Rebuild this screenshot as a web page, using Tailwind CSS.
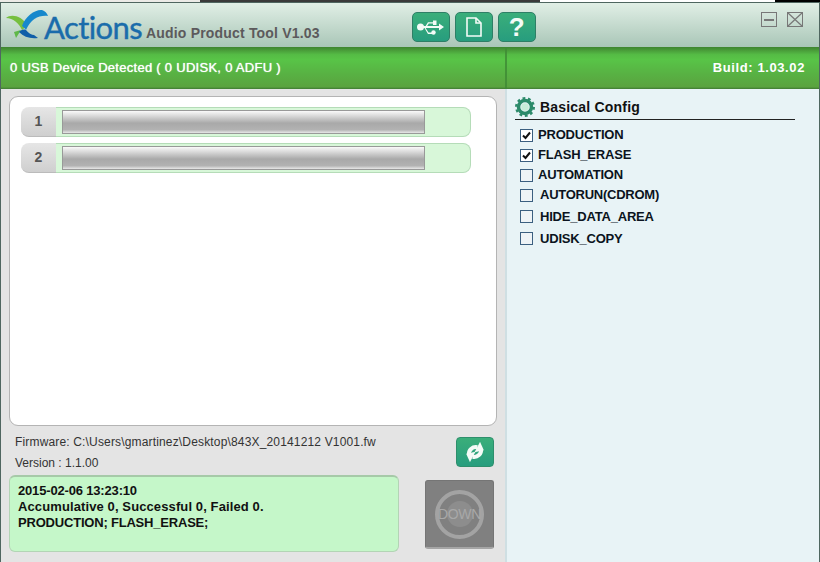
<!DOCTYPE html>
<html lang="en">
<head>
  <meta charset="UTF-8">
  <title>Actions Audio Product Tool</title>
  <script src="https://cdn.jsdelivr.net/npm/@tailwindcss/browser@4"></script>
</head>
<body class="w-[820px] h-[562px] overflow-hidden bg-white font-['Liberation_Sans',Arial,sans-serif]">
  <!-- strip of desktop above the window -->
  <div class="flex h-[2px]">
    <div class="w-[200px] bg-[#ecebe7]"></div>
    <div class="w-[340px] bg-[#3a3a3a]"></div>
    <div class="w-[235px] bg-white"></div>
    <div class="w-[45px] bg-black"></div>
  </div>

  <div class="h-[560px] flex flex-col border-t border-x border-[#4f6660]">
    <!-- title bar -->
    <div class="h-[44px] shrink-0 flex bg-gradient-to-b from-[#e1efe6] to-[#a9c6b7]">
      <svg class="ml-[4px] mt-[6px] w-[44px] h-[32px] shrink-0" viewBox="0 0 44 32">
        <path d="M1 9 C6 5 16 6 23 17 C21 18 19 19 17 21 C14 14 8 9 1 9Z" fill="#76bf3f"/>
        <path d="M9 23 L16 21 L11 29Z" fill="#5fb848"/>
        <path d="M17 17 C20 7 31 0 37 1 C40 2 42 4 43 7 C34 6 26 10 21 21 C20 19 18 18 17 17Z" fill="#1688cc"/>
        <path d="M14 23 C16 21 18 20 21 21 C23 24 27 26 29 26 L33 29 C25 30 19 28 14 23Z" fill="#0f5ea8"/>
      </svg>
      <div class="ml-[-5px] mt-[6px] text-[31px] leading-[36px] tracking-[-0.6px] text-[#1a6cab] [-webkit-text-stroke:0.4px_#1a6cab] font-['Lato',sans-serif]">Actions</div>
      <div class="ml-[4px] mt-[22px] text-[14px] leading-[16px] font-bold tracking-[0.18px] text-[#5c5a5c]">Audio Product Tool V1.03</div>

      <div class="ml-[92px] mt-[9px] flex gap-[5px]">
        <div class="w-[38px] h-[30px] rounded-[5px] border border-[#2e7f66] bg-gradient-to-b from-[#3aae7a] to-[#279d7e] flex items-center justify-center">
          <svg class="w-[27px] h-[16px]" viewBox="0 0 27 16" fill="#f4fbf7">
            <circle cx="3.500" cy="8" r="3.500"/>
            <path d="M3 7h19V4.500L27 8l-5 3.500V9H3Z"/>
            <path d="M8 8 L11 3.200H16V1.500H19.500V6H16V4.500H11.800L9.500 8Z"/>
            <path d="M8 8 L11.500 13.500H15.500V15H11L7.500 9Z"/>
            <circle cx="16.500" cy="13.500" r="2.200"/>
          </svg>
        </div>
        <div class="w-[38px] h-[30px] rounded-[5px] border border-[#2e7f66] bg-gradient-to-b from-[#3aae7a] to-[#279d7e] flex items-center justify-center">
          <svg class="w-[16px] h-[20px]" viewBox="0 0 16 20" fill="none" stroke="#f4fbf7" stroke-width="1.600">
            <path d="M1 1H10L15 6V19H1Z"/>
            <path d="M10 1V6H15"/>
          </svg>
        </div>
        <div class="w-[38px] h-[30px] rounded-[5px] border border-[#2e7f66] bg-gradient-to-b from-[#3aae7a] to-[#279d7e] flex items-center justify-center text-[26px] leading-[26px] font-bold text-[#f4fbf7]">?</div>
      </div>

      <div class="ml-[225px] mt-[9px] w-[16px] h-[15px] border border-[#777] flex items-center justify-center">
        <div class="w-[10px] h-[2px] bg-[#777]"></div>
      </div>
      <svg class="ml-[10px] mt-[9px] w-[16px] h-[15px]" viewBox="0 0 16 15" fill="none" stroke="#777">
        <rect x="0.500" y="0.500" width="15" height="14"/>
        <path d="M1 1L15 14M15 1L1 14" stroke-width="1.200"/>
      </svg>
    </div>

    <!-- status bar -->
    <div class="h-[42px] shrink-0 flex items-center bg-[linear-gradient(#3f8430_0%,#55bb45_18%,#58c447_30%,#58b143_65%,#5aa33f_95%,#3f7a33_100%)] text-white">
      <div class="w-[506px] h-full flex items-center pl-[9px] border-r-2 border-[#3f8a34]/80 text-[13px] tracking-[0.28px] [text-shadow:0_0_1px_#fff]">0 USB Device Detected ( 0 UDISK, 0 ADFU )</div>
      <div class="flex-1 text-right pr-[14px] text-[13px] font-bold tracking-[0.6px]">Build: 1.03.02</div>
    </div>

    <div class="flex-1 flex min-h-0">
      <!-- left side -->
      <div class="w-[504px] shrink-0 bg-[#e4e4e4] pl-[8px] pr-[8px] pt-[7px]">
        <div class="h-[330px] bg-white rounded-[9px] border border-[#b4b4b4] pt-[10px] pl-[11px] flex flex-col gap-[6px]">
          <div class="w-[450px] h-[30px] flex">
            <div class="w-[35px] shrink-0 rounded-l-[8px] bg-gradient-to-b from-[#e6e6e6] to-[#cfcfcf] border-b border-[#bbb] flex items-center justify-center text-[14px] font-bold text-[#555]">1</div>
            <div class="flex-1 rounded-r-[8px] bg-[#d8f7d9] border-y border-r border-[#b5dcb8] pl-[6px] pt-[2px]">
              <div class="w-[363px] h-[24px] border border-[#999] bg-[linear-gradient(#fafafa,#a9a9a9_55%,#b2b2b2_85%,#e8e8e8)]"></div>
            </div>
          </div>
          <div class="w-[450px] h-[30px] flex">
            <div class="w-[35px] shrink-0 rounded-l-[8px] bg-gradient-to-b from-[#e6e6e6] to-[#cfcfcf] border-b border-[#bbb] flex items-center justify-center text-[14px] font-bold text-[#555]">2</div>
            <div class="flex-1 rounded-r-[8px] bg-[#d8f7d9] border-y border-r border-[#b5dcb8] pl-[6px] pt-[2px]">
              <div class="w-[363px] h-[24px] border border-[#999] bg-[linear-gradient(#fafafa,#a9a9a9_55%,#b2b2b2_85%,#e8e8e8)]"></div>
            </div>
          </div>
        </div>

        <div class="flex justify-between h-[49px] pl-[6px] pr-[3px]">
          <div class="text-[12px] text-[#333] pt-[8px]">
            <div class="leading-[16px] tracking-[0.16px]">Firmware: C:\Users\gmartinez\Desktop\843X_20141212 V1001.fw</div>
            <div class="leading-[16px] mt-[5px]">Version : 1.1.00</div>
          </div>
          <div class="mt-[11px] w-[38px] h-[30px] rounded-[4px] border border-[#2e8f6c] bg-gradient-to-b from-[#3aae7a] to-[#279d7e] flex items-center justify-center">
            <svg class="w-[20px] h-[20px]" viewBox="0 0 20 20">
              <g transform="rotate(-15 10 10)">
                <path d="M3.500 11 C4 6.500 9 3.800 13.500 6" fill="none" stroke="#f4fbf7" stroke-width="4"/>
                <path d="M9.500 10 L19 10.500 L17.500 1.500Z" fill="#f4fbf7"/>
              </g>
              <g transform="rotate(165 10 10)">
                <path d="M3.500 11 C4 6.500 9 3.800 13.500 6" fill="none" stroke="#f4fbf7" stroke-width="4"/>
                <path d="M9.500 10 L19 10.500 L17.500 1.500Z" fill="#f4fbf7"/>
              </g>
            </svg>
          </div>
        </div>

        <div class="flex justify-between">
          <div class="w-[390px] h-[77px] rounded-[6px] border border-[#b3d4b5] border-t-2 border-t-[#a6c9a8] bg-[#c5f7c9] pl-[8px] pt-[6px] text-[13px] leading-[16px] font-bold text-[#111]">
            <div class="tracking-[-0.17px]">2015-02-06 13:23:10</div>
            <div class="tracking-[0.11px]">Accumulative 0, Successful 0, Failed 0.</div>
            <div class="tracking-[-0.2px]">PRODUCTION; FLASH_ERASE;</div>
          </div>
          <div class="mt-[5px] mr-[3px] w-[69px] h-[69px] rounded-[3px] bg-[#808080] border-b-2 border-b-[#a5a5a5] border-x border-t border-[#757575] flex items-center justify-center">
            <div class="w-[49px] h-[49px] rounded-full border-[4px] border-[#a3a3a3] flex items-center justify-center">
              <div class="w-[26px] h-[26px] rounded-full bg-[#8d8d8d] flex items-center justify-center text-[14px] tracking-[-0.3px] text-[#a8a8a8] whitespace-nowrap">DOWN</div>
            </div>
          </div>
        </div>
      </div>

      <!-- right side -->
      <div class="flex-1 bg-[#e8f3f6] border-l-2 border-[#cfdfe3] pt-[7px] pl-[8px]">
        <div class="w-[280px] h-[24px] flex items-center border-b border-[#222] pb-[1px]">
          <svg class="w-[20px] h-[20px] shrink-0" viewBox="0 0 20 20">
            <circle cx="10" cy="10" r="6.500" fill="none" stroke="#2c8a6a" stroke-width="3.500"/>
            <circle cx="10" cy="10" r="8.800" fill="none" stroke="#2c8a6a" stroke-width="2.400" stroke-dasharray="2.800 2.730"/>
            <circle cx="10" cy="10" r="3.800" fill="#c8ecd8"/>
          </svg>
          <span class="ml-[5px] text-[14px] font-bold text-[#111] tracking-[0.2px]">Basical Config</span>
        </div>
        <div class="pl-[5px] pt-[5px] text-[13px] font-bold text-[#0b1320] tracking-[-0.2px]">
          <div class="h-[20px] flex items-center">
            <div class="w-[13px] h-[13px] border border-[#3b5f80] bg-white flex items-center justify-center"><svg class="w-[9px] h-[9px]" viewBox="0 0 9 9" fill="none" stroke="#111" stroke-width="2"><path d="M1 4.500L3.500 7L8 1.500"/></svg></div>
            <span class="ml-[5px]">PRODUCTION</span>
          </div>
          <div class="h-[20px] flex items-center">
            <div class="w-[13px] h-[13px] border border-[#3b5f80] bg-white flex items-center justify-center"><svg class="w-[9px] h-[9px]" viewBox="0 0 9 9" fill="none" stroke="#111" stroke-width="2"><path d="M1 4.500L3.500 7L8 1.500"/></svg></div>
            <span class="ml-[5px]">FLASH_ERASE</span>
          </div>
          <div class="h-[20px] flex items-center">
            <div class="w-[13px] h-[13px] border border-[#3b5f80] bg-[#eef3f6]"></div>
            <span class="ml-[5px]">AUTOMATION</span>
          </div>
          <div class="h-[20px] flex items-center">
            <div class="w-[13px] h-[13px] border border-[#3b5f80] bg-[#eef3f6]"></div>
            <span class="ml-[7px] tracking-[-0.25px]">AUTORUN(CDROM)</span>
          </div>
          <div class="h-[23px] flex items-center">
            <div class="w-[13px] h-[13px] border border-[#3b5f80] bg-[#eef3f6]"></div>
            <span class="ml-[7px]">HIDE_DATA_AREA</span>
          </div>
          <div class="h-[21px] flex items-center">
            <div class="w-[13px] h-[13px] border border-[#3b5f80] bg-[#eef3f6]"></div>
            <span class="ml-[7px]">UDISK_COPY</span>
          </div>
        </div>
      </div>
    </div>
  </div>
</body>
</html>
